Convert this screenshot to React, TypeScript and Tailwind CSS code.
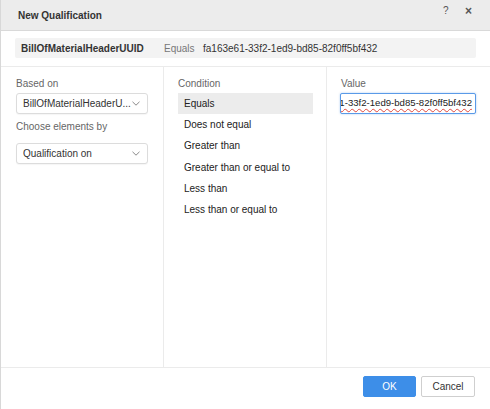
import React from 'react';

const font = { fontFamily: '"Liberation Sans", Arial, sans-serif' };

function Chevron() {
  return (
    <svg width="8" height="5" viewBox="0 0 8 5" fill="none" className="shrink-0">
      <path d="M0.5 0.8 L4 4.2 L7.5 0.8" stroke="#8a8a8a" strokeWidth="1" />
    </svg>
  );
}

function Select({ value }: { value: string }) {
  return (
    <div className="flex h-[21px] items-center justify-between rounded-[3px] border border-[#dcdcdc] bg-white pl-[6px] pr-[7px] shadow-[0_1px_1px_rgba(0,0,0,0.04)]">
      <span className="truncate text-[10px] text-[#333]">{value}</span>
      <Chevron />
    </div>
  );
}

const conditions = [
  'Equals',
  'Does not equal',
  'Greater than',
  'Greater than or equal to',
  'Less than',
  'Less than or equal to',
];

export default function App() {
  return (
    <div className="flex h-[409px] w-[490px] flex-col overflow-hidden border-l border-[#d8d8d8] bg-white" style={font}>
      {/* Header */}
      <div className="relative flex h-[31px] shrink-0 items-center border-b border-[#d9d9d9] bg-[#ececec] pl-[17px]">
        <span className="text-[10px] font-bold text-[#333]">New Qualification</span>
        <span className="absolute left-[442px] top-[3px] text-[10px] text-[#555]">?</span>
        <span className="absolute left-[464px] top-[2px] text-[12px] font-bold text-[#555]">×</span>
      </div>

      {/* Summary */}
      <div className="mx-[14px] mt-[7px] flex h-[20px] items-center rounded-[2px] bg-[#f3f3f3] pl-[6px] text-[10px]">
        <span className="w-[143px] font-bold text-[#333]">BillOfMaterialHeaderUUID</span>
        <span className="w-[39px] text-[#777]">Equals</span>
        <span className="text-[#333]">fa163e61-33f2-1ed9-bd85-82f0ff5bf432</span>
      </div>

      {/* Columns */}
      <div className="mt-[8px] grid h-[302px] grid-cols-[163px_163px_minmax(0,1fr)] border-y border-[#ebebeb]">
        <div className="border-r border-[#ebebeb] px-[15px] pt-[9px]">
          <div className="mb-[1px] h-[16px] text-[10px] leading-[16px] text-[#666]">Based on</div>
          <Select value="BillOfMaterialHeaderU..." />
          <div className="mt-[5px] mb-[8px] h-[16px] text-[10px] leading-[16px] text-[#666]">Choose elements by</div>
          <Select value="Qualification on" />
        </div>
        <div className="border-r border-[#ebebeb] pl-[14px] pr-[13px] pt-[9px]">
          <div className="mb-[1px] h-[16px] text-[10px] leading-[16px] text-[#666]">Condition</div>
          <div className="flex flex-col">
            {conditions.map((c, i) => (
              <div
                key={c}
                className={`flex h-[21.2px] items-center pl-[6px] text-[10px] text-[#222] ${i === 0 ? 'bg-[#ececec]' : ''}`}
              >
                {c}
              </div>
            ))}
          </div>
        </div>
        <div className="min-w-0 pl-[13px] pr-[14px] pt-[9px]">
          <div className="mb-[1px] h-[16px] pl-[1px] text-[10px] leading-[16px] text-[#666]">Value</div>
          <div className="flex h-[21px] min-w-0 items-center justify-end overflow-hidden whitespace-nowrap rounded-[2px] border border-[#5a9ae8] bg-white pr-[3px] shadow-[0_0_2px_rgba(74,144,226,0.5)]">
            <span className="shrink-0 text-[9.6px] text-[#222] underline decoration-[#e0473c] decoration-wavy decoration-1 underline-offset-2">
              fa163e61-33f2-1ed9-bd85-82f0ff5bf432
            </span>
          </div>
        </div>
      </div>

      {/* Footer */}
      <div className="flex justify-end gap-[5px] pr-[15px] pt-[8px]">
        <button className="h-[21px] w-[53px] rounded-[2px] border border-[#3d8ee8] bg-[#3d8ee8] text-[10px] text-white">
          OK
        </button>
        <button className="h-[21px] w-[54px] rounded-[2px] border border-[#cfcfcf] bg-white text-[10px] text-[#333]">
          Cancel
        </button>
      </div>
    </div>
  );
}
